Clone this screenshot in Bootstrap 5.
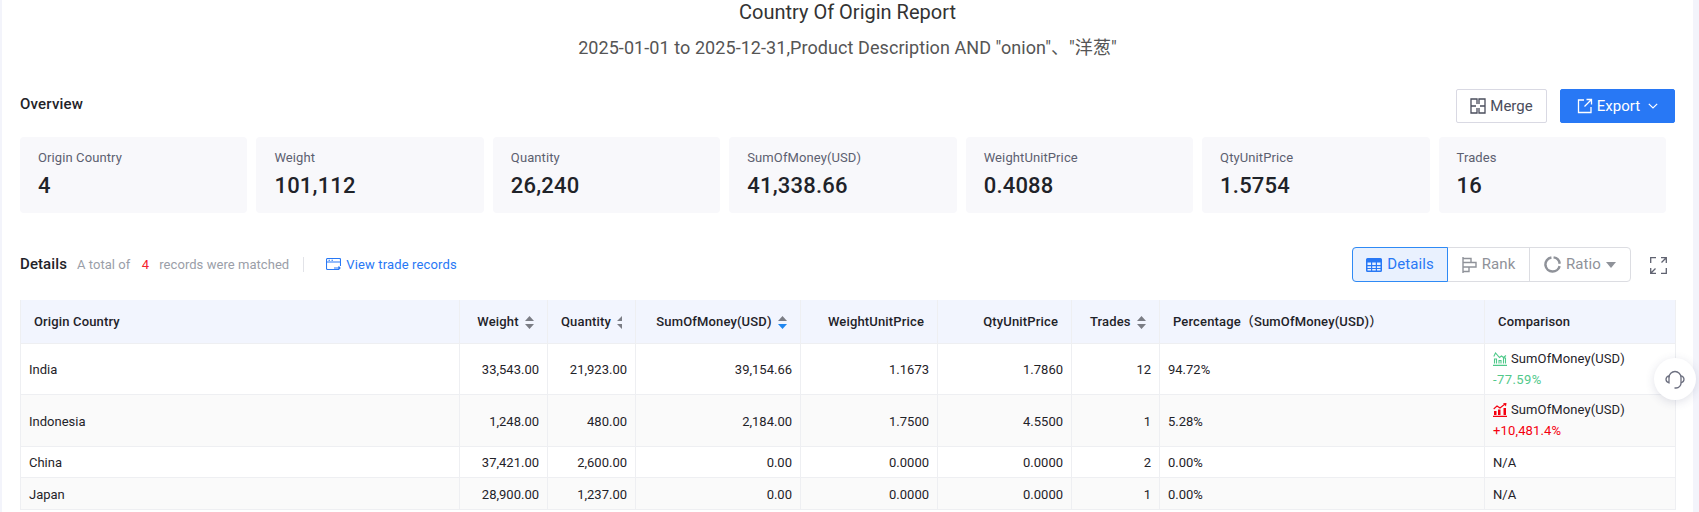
<!DOCTYPE html>
<html lang="en">
<head>
    <meta charset="UTF-8">
    <meta name="viewport" content="width=device-width, initial-scale=1.0">
    <title>Country Of Origin Report</title>
    <link href="https://cdn.jsdelivr.net/npm/bootstrap@5.3.0/dist/css/bootstrap.min.css" rel="stylesheet">
    <style>
        html, body { height: 100%; overflow: hidden; }
        body { background: #f3f4fb; font-family: Roboto, "Noto Sans CJK SC", sans-serif; color: #1f2329; }
        .report-page { background: #fff; margin-left: 2px; margin-right: 6px; height: 512px; padding: 0 18px 0 18px; position: relative; }
        .report-title { font-size: 20px; line-height: 24px; font-weight: 400; margin: 0; color: #333; }
        .report-sub { font-size: 18px; line-height: 26px; margin: 11px 0 0; color: #555; letter-spacing: .07px; }
        .overview-bar { margin-top: 28px; height: 34px; }
        .sec-name { font-size: 15px; font-weight: 500; color: #1f2329; margin-bottom: 3px; letter-spacing: .2px; }
        .btn-merge, .btn-export { height: 34px; font-size: 15px; padding: 0; border-radius: 2px; display: inline-flex; align-items: center; justify-content: center; gap: 4px; }
        .btn-merge { width: 91px; background: #fff; border: 1px solid #d9d9e3; color: #4a4d5c; margin-right: 13px; }
        .btn-export { width: 115px; background: #2878f5; border: 1px solid #2878f5; color: #fff; }
        .stat-grid { margin-top: 14px; gap: 9px; width: 1646px; }
        .stat-box { flex: 1 1 0; height: 76px; background: #f8f8fb; border-radius: 4px; padding: 12px 17px 12px 18px; }
        .stat-name { font-size: 13px; line-height: 18px; color: #5c6070; letter-spacing: .1px; }
        .stat-num { font-size: 22px; line-height: 28px; margin-top: 5px; font-weight: 500; letter-spacing: .2px; color: #1f2329; }
        .detail-bar { margin-top: 34px; height: 35px; }
        .detail-name { font-size: 15px; font-weight: 500; letter-spacing: .1px; }
        .detail-note { font-size: 13px; color: #9a9ea8; margin-left: 10px; letter-spacing: .05px; }
        .detail-note b { color: #f5222d; font-weight: 400; margin: 0 7px 0 8px; }
        .detail-sep { width: 1px; height: 15px; background: #e2e3e8; margin: 0 22px 0 14px; }
        .trade-link { font-size: 13px; color: #2878f5; text-decoration: none; display: inline-flex; align-items: center; gap: 5px; letter-spacing: .15px; }
        .view-group { width: 279px; height: 35px; border: 1px solid #dcdde2; border-radius: 4px; font-size: 15px; color: #8f9299; letter-spacing: .1px; }
        .view-item { height: 100%; display: flex; align-items: center; justify-content: center; gap: 5px; border-right: 1px solid #dcdde2; }
        .view-item:last-child { border-right: 0; }
        .view-details { width: 96px; margin: -1px 0 -1px -1px; height: 35px; background: #e9f1fe; border: 1px solid #2f8af5; border-radius: 4px 0 0 4px; color: #2878f5; }
        .view-rank { width: 82px; }
        .view-ratio { flex: 1; }
        .expand-btn { margin: 1px 8px 0 19px; }
        .data-table { width: 1655px; margin-top: 18px; table-layout: fixed; border-collapse: collapse; font-size: 13px; margin-bottom: 0; }
        .data-table th, .data-table td { border: 1px solid #eeeff2; padding: 2px 8px 0; vertical-align: middle; color: #1f2329; }
        .data-table thead th { background: #f2f5fe; height: 43px; font-weight: 500; padding: 0 13px; border-top: 0; letter-spacing: .15px; white-space: nowrap; }
        .data-table th.num-head { text-align: right; padding-right: 13px; }
        .data-table td.num-cell { text-align: right; padding-right: 8px; }
        .data-table tbody tr:nth-child(even) td { background: #fafafa; }
        .row-tall td { height: 51.5px; }
        .row-low td { height: 31.5px; }
        .w-country { width: 439px; } .w-weight { width: 88px; } .w-qty { width: 88px; } .w-sum { width: 165px; }
        .w-wup { width: 137px; } .w-qup { width: 134px; } .w-trades { width: 88px; } .w-pct { width: 325px; } .w-cmp { width: 191px; }
        .sort-ico { margin-left: 3px; vertical-align: -3px; }
        .cmp-name { line-height: 18px; display: flex; align-items: center; gap: 4px; letter-spacing: .1px; }
        .cmp-down, .cmp-up { font-size: 13px; line-height: 20px; margin-top: 2px; letter-spacing: .15px; }
        .data-table td .cmp-down { color: #52c98b; letter-spacing: .4px; }
        .data-table td .cmp-up { color: #f5000f; }
        .help-float { position: absolute; left: 1652px; top: 358px; width: 42px; height: 42px; border-radius: 50%; background: #fff; box-shadow: 0 2px 10px rgba(60,70,110,.16); display: flex; align-items: center; justify-content: center; }
    </style>
</head>
<body>
    <div class="report-page">
        <div class="text-center">
            <h1 class="report-title">Country Of Origin Report</h1>
            <p class="report-sub">2025-01-01 to 2025-12-31,Product Description AND "onion"、"洋葱"</p>
        </div>

        <div class="overview-bar d-flex align-items-center justify-content-between">
            <div class="sec-name">Overview</div>
            <div class="d-flex">
                <button class="btn-merge" type="button">
                    <svg width="16" height="16" viewBox="0 0 16 16" fill="none" stroke="#4a4d5c" stroke-width="1.300"><path d="M7 6V1H1v14h6v-5M9 6V1h6v14H9v-5M1 8h5M10 8h5"/></svg>
                    Merge
                </button>
                <button class="btn-export" type="button">
                    <svg width="16" height="16" viewBox="0 0 16 16" fill="none" stroke="#fff" stroke-width="1.300"><path d="M7 2H1.500v12.500H14V9M9.500 1.500h5v5M14.500 1.500L7.500 8.500"/></svg>
                    Export
                    <svg class="ms-1" width="10" height="6" viewBox="0 0 10 6" fill="none" stroke="#fff" stroke-width="1.200"><path d="M.8.8L5 5l4.200-4.200"/></svg>
                </button>
            </div>
        </div>

        <div class="stat-grid d-flex">
            <div class="stat-box"><div class="stat-name">Origin Country</div><div class="stat-num">4</div></div>
            <div class="stat-box"><div class="stat-name">Weight</div><div class="stat-num">101,112</div></div>
            <div class="stat-box"><div class="stat-name">Quantity</div><div class="stat-num">26,240</div></div>
            <div class="stat-box"><div class="stat-name">SumOfMoney(USD)</div><div class="stat-num">41,338.66</div></div>
            <div class="stat-box"><div class="stat-name">WeightUnitPrice</div><div class="stat-num">0.4088</div></div>
            <div class="stat-box"><div class="stat-name">QtyUnitPrice</div><div class="stat-num">1.5754</div></div>
            <div class="stat-box"><div class="stat-name">Trades</div><div class="stat-num">16</div></div>
        </div>

        <div class="detail-bar d-flex align-items-center justify-content-between">
            <div class="d-flex align-items-center">
                <span class="detail-name">Details</span>
                <span class="detail-note">A total of <b>4</b> records were matched</span>
                <span class="detail-sep"></span>
                <a class="trade-link" href="#">
                    <svg width="15" height="13" viewBox="0 0 15 13" fill="none" stroke="#2878f5" stroke-width="1.100"><path d="M13 11.500H1.500a1 1 0 0 1-1-1v-9a1 1 0 0 1 1-1h12a1 1 0 0 1 1 1V8M.5 4h14M2.500 2.300h1.500M5.500 2.300H7M8 10h6M12.500 8.500l1.500 1.500-1.500 1.500"/></svg>
                    View trade records
                </a>
            </div>
            <div class="d-flex align-items-center">
                <div class="view-group d-flex">
                    <div class="view-item view-details">
                        <svg width="16" height="14" viewBox="0 0 16 14"><path fill="#2878f5" d="M1.500 0h13A1.500 1.500 0 0 1 16 1.500v11a1.500 1.500 0 0 1-1.500 1.500h-13A1.500 1.500 0 0 1 0 12.500v-11A1.500 1.500 0 0 1 1.500 0z"/><path fill="#e9f1fe" d="M1.500 4.500h3.500v2.500H1.500zM6.200 4.500h3.600v2.500H6.200zM11 4.500h3.500v2.500H11zM1.500 8.200h3.500v1.700H1.500zM6.200 8.200h3.600v1.700H6.200zM11 8.200h3.500v1.700H11zM1.500 11h3.500v1.500H1.500zM6.200 11h3.600v1.500H6.200zM11 11h3.500v1.500H11z"/></svg>
                        Details
                    </div>
                    <div class="view-item view-rank">
                        <svg width="15" height="16" viewBox="0 0 15 16" fill="none" stroke="#8f9299" stroke-width="1.400"><path d="M1 0v16M1 1.500h8v4H1M1 5.500h13v4.500H1M1 10h6v4.500H1"/></svg>
                        Rank
                    </div>
                    <div class="view-item view-ratio">
                        <svg width="17" height="17" viewBox="0 0 16 16" fill="none" stroke="#8f9299" stroke-width="2.300"><path d="M9 1.300a6.800 6.800 0 0 1 5.800 6M14.700 9.500a6.800 6.800 0 0 1-13.300-.5 6.800 6.800 0 0 1 5.600-7.600"/></svg>
                        Ratio
                        <svg width="10" height="6" viewBox="0 0 10 6"><path fill="#8f9299" d="M0 0h10L5 6z"/></svg>
                    </div>
                </div>
                <svg class="expand-btn" width="17" height="17" viewBox="0 0 17 17" fill="none" stroke="#5f6270" stroke-width="1.300"><path d="M6 .7H.7V6M11 .7h5.300V6M6 16.300H.7V11M11 16.300h5.300V11M15.500 1.500l-4 4M1.500 15.500l4-4"/></svg>
            </div>
        </div>

        <table class="table data-table">
            <colgroup>
                <col class="w-country"><col class="w-weight"><col class="w-qty"><col class="w-sum"><col class="w-wup"><col class="w-qup"><col class="w-trades"><col class="w-pct"><col class="w-cmp">
            </colgroup>
            <thead>
                <tr>
                    <th>Origin Country</th>
                    <th class="num-head">Weight <svg class="sort-ico" width="9" height="13" viewBox="0 0 9 13"><path fill="#7b7d85" d="M4.500 0L9 5H0zM0 8h9l-4.500 5z"/></svg></th>
                    <th class="num-head">Quantity <svg class="sort-ico" width="5" height="13" viewBox="0 0 5 13"><path fill="#7b7d85" d="M5 0v5H0zM0 8h5v5z"/></svg></th>
                    <th class="num-head">SumOfMoney(USD) <svg class="sort-ico" width="9" height="13" viewBox="0 0 9 13"><path fill="#7b7d85" d="M4.500 0L9 5H0z"/><path fill="#1f86f0" d="M0 8h9l-4.500 5z"/></svg></th>
                    <th class="num-head">WeightUnitPrice</th>
                    <th class="num-head">QtyUnitPrice</th>
                    <th class="num-head">Trades <svg class="sort-ico" width="9" height="13" viewBox="0 0 9 13"><path fill="#7b7d85" d="M4.500 0L9 5H0zM0 8h9l-4.500 5z"/></svg></th>
                    <th>Percentage（SumOfMoney(USD)）</th>
                    <th>Comparison</th>
                </tr>
            </thead>
            <tbody>
                <tr class="row-tall">
                    <td>India</td><td class="num-cell">33,543.00</td><td class="num-cell">21,923.00</td><td class="num-cell">39,154.66</td><td class="num-cell">1.1673</td><td class="num-cell">1.7860</td><td class="num-cell">12</td><td>94.72%</td>
                    <td>
                        <div class="cmp-name">
                            <svg width="14" height="14" viewBox="0 0 14 14" fill="none" stroke="#4fc98a" stroke-width="1.100"><path d="M0 13.400h14M1.500 11.500V7h2v4.500M6 11.500V8.500h2v3M10.500 11.500V6h2v5.500M.8 4.500L2.500 1l4 4.500 2-1.500 2 1.500 2.500-2"/></svg>
                            SumOfMoney(USD)
                        </div>
                        <div class="cmp-down">-77.59%</div>
                    </td>
                </tr>
                <tr class="row-tall">
                    <td>Indonesia</td><td class="num-cell">1,248.00</td><td class="num-cell">480.00</td><td class="num-cell">2,184.00</td><td class="num-cell">1.7500</td><td class="num-cell">4.5500</td><td class="num-cell">1</td><td>5.28%</td>
                    <td>
                        <div class="cmp-name">
                            <svg width="14" height="14" viewBox="0 0 14 14"><path fill="#f5000f" d="M0 12.800h14V14H0zM1 8h2.500v4H1zM5 6.500h2.500V12H5zM10.500 5H13v7h-2.500z"/><path fill="none" stroke="#f5000f" stroke-width="1.100" d="M.7 6L4 3l3 2 5-4"/><path fill="#f5000f" d="M10 .2L13.500 0 13 3.500z"/></svg>
                            SumOfMoney(USD)
                        </div>
                        <div class="cmp-up">+10,481.4%</div>
                    </td>
                </tr>
                <tr class="row-low">
                    <td>China</td><td class="num-cell">37,421.00</td><td class="num-cell">2,600.00</td><td class="num-cell">0.00</td><td class="num-cell">0.0000</td><td class="num-cell">0.0000</td><td class="num-cell">2</td><td>0.00%</td><td>N/A</td>
                </tr>
                <tr class="row-low">
                    <td>Japan</td><td class="num-cell">28,900.00</td><td class="num-cell">1,237.00</td><td class="num-cell">0.00</td><td class="num-cell">0.0000</td><td class="num-cell">0.0000</td><td class="num-cell">1</td><td>0.00%</td><td>N/A</td>
                </tr>
            </tbody>
        </table>

        <div class="help-float">
            <svg width="20" height="21" viewBox="0 0 20 21" fill="none" stroke="#6d7080" stroke-width="1.300"><path d="M4 8.500a6 6 0 0 1 12 0v5a5 5 0 0 1-5 5.500H9.500"/><path d="M4 6.800C2 7.300 1 9 1 10.300s1 3 3 3.500zM16 6.800c2 .5 3 2.200 3 3.500s-1 3-3 3.500"/></svg>
        </div>
    </div>

    <script src="https://cdn.jsdelivr.net/npm/bootstrap@5.3.0/dist/js/bootstrap.bundle.min.js"></script>
</body>
</html>
